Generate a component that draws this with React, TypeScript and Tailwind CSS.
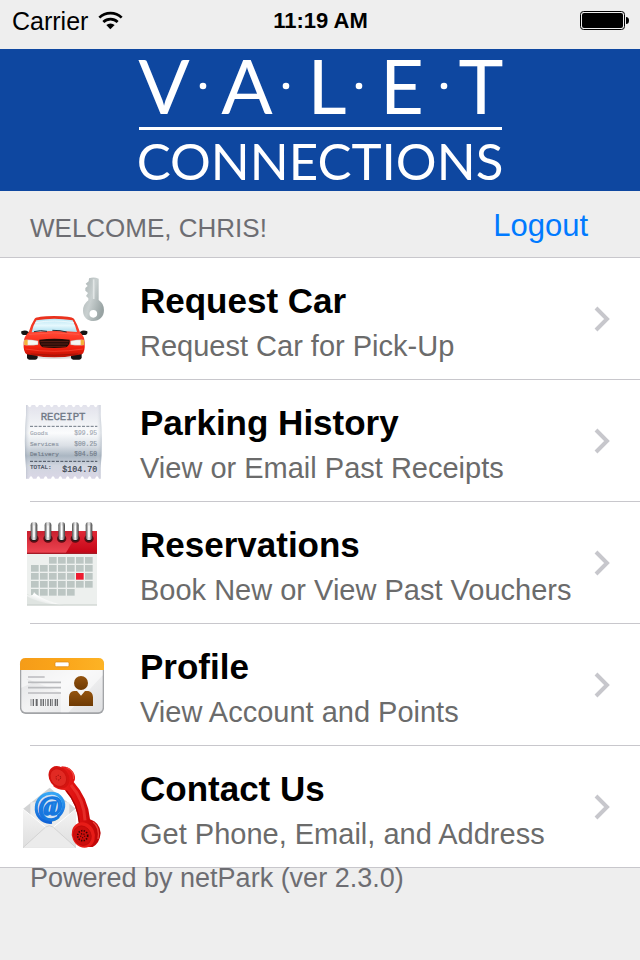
import type { ReactNode } from "react";

function WifiIcon() {
  return (
    <svg viewBox="0 0 75 57" className="h-[19px] w-[25px]" aria-hidden="true">
      <g fill="none" stroke="#000" strokeWidth="8">
        <path d="M4 20 A48 48 0 0 1 71 20" />
        <path d="M16 33 A31 31 0 0 1 59 33" />
      </g>
      <path d="M25 42 A19 19 0 0 1 50 42 L37 55 Z" />
    </svg>
  );
}

function BatteryIcon() {
  return (
    <svg viewBox="0 0 49 19" className="h-[19px] w-[49px]" role="img" aria-label="Battery full">
      <rect x="0.5" y="0.5" width="44" height="18" rx="3" fill="none" stroke="#000" />
      <rect x="2" y="2" width="41" height="15" rx="2" />
      <path d="M46 6 Q49 6 49 9.500 Q49 13 46 13 Z" />
    </svg>
  );
}

function Logo() {
  return (
    <svg
      viewBox="0 0 400 142"
      className="h-[142px] w-[400px] overflow-visible"
      role="img"
      aria-label="Valet Connections"
    >
      <g fill="#fff" textAnchor="middle" className="font-['Lato',sans-serif]">
        <g fontSize="76">
          <text x="44" y="65">V</text>
          <text x="127" y="65">A</text>
          <text x="207" y="65">L</text>
          <text x="282" y="65">E</text>
          <text x="361" y="65">T</text>
        </g>
        <circle cx="83" cy="37" r="3.300" />
        <circle cx="166" cy="37" r="3.300" />
        <circle cx="239" cy="37" r="3.300" />
        <circle cx="324" cy="37" r="3.300" />
        <rect x="19" y="78" width="363" height="3" />
        <text x="200" y="131" fontSize="51">CONNECTIONS</text>
      </g>
    </svg>
  );
}

function CarIcon() {
  return (
    <svg viewBox="0 0 330 300" className="h-[100px] w-[110px]" aria-hidden="true">
      <defs>
        <linearGradient id="keyFill" x1="0" x2="1" y1="0" y2="0.6">
          <stop offset="0" stopColor="#aab3b3" />
          <stop offset="0.5" stopColor="#c9d0d0" />
          <stop offset="1" stopColor="#98a3a3" />
        </linearGradient>
        <linearGradient id="carBody" x1="0" x2="0" y1="0" y2="1">
          <stop offset="0" stopColor="#e8301c" />
          <stop offset="0.45" stopColor="#ff4330" />
          <stop offset="0.75" stopColor="#f5200e" />
          <stop offset="1" stopColor="#bd1204" />
        </linearGradient>
        <linearGradient id="carGlass" x1="0" x2="0" y1="0" y2="1">
          <stop offset="0" stopColor="#b9e6f4" />
          <stop offset="0.5" stopColor="#e6f8fd" />
          <stop offset="1" stopColor="#a6dced" />
        </linearGradient>
      </defs>
      <path
        d="M237 28 Q251 23 266 29 V93 Q282 103 282 124 C282 144 268 156 250 156 C232 156 219 143 219 125 Q219 106 235 94 V88 L228 81 L234 72 L226 65 L226 57 L233 51 L227 44 L236 37 Z M250 123 A11 11 0 1 0 250 146 A11 11 0 1 0 250 123"
        fill="url(#keyFill)"
        fillRule="evenodd"
      />
      <path d="M251 31 V90" stroke="#e2e6e6" strokeWidth="5" />
      <ellipse cx="132" cy="262" rx="82" ry="8" fill="#000" opacity="0.12" />
      <rect x="51" y="248" width="32" height="24" rx="7" fill="#161313" />
      <rect x="183" y="248" width="32" height="24" rx="7" fill="#161313" />
      <path d="M34 187 Q46 181 55 188 L62 195 L54 198 H40 Q32 196 34 187Z" fill="#161616" />
      <path d="M232 187 Q220 181 211 188 L204 195 L212 198 H226 Q234 196 232 187Z" fill="#161616" />
      <path
        d="M74 149 Q80 142 132 141 Q184 142 192 149 Q202 165 210 190 Q224 202 224 220 Q226 249 216 256 Q174 265 133 265 Q91 265 50 256 Q39 249 41 220 Q42 202 56 190 Q63 165 74 149Z"
        fill="url(#carBody)"
      />
      <path d="M79 154 Q132 145 188 154 Q196 169 201 189 Q132 182 65 190 Q70 168 79 154Z" fill="url(#carGlass)" />
      <path d="M76 161 Q132 151 192 161" fill="none" stroke="#fff" strokeWidth="3" opacity="0.6" />
      <path d="M72 188 L92 185 L111 187 M127 184 L150 185 L170 189" fill="none" stroke="#253238" strokeWidth="3" />
      <path d="M57 196 Q132 187 208 196" fill="none" stroke="#ff6352" strokeWidth="2" />
      <path d="M43 213 Q62 211 84 216 V227 Q61 230 43 228Z" fill="#f5f6f2" stroke="#aaa" />
      <path d="M222 213 Q203 211 182 216 V227 Q204 230 222 228Z" fill="#f5f6f2" stroke="#aaa" />
      <path d="M43 213 L53 212 V228 H43Z M222 213 L212 212 V228 H222Z" fill="#f6b33a" />
      <path d="M88 212 Q133 206 179 212 Q181 228 168 235 Q133 239 98 235 Q86 228 88 212Z" fill="#210b06" />
      <path d="M91 218 H176 M93 225 H174 M98 232 H168" stroke="#7a2c1c" strokeWidth="2" />
      <path d="M46 240 Q132 254 219 240" fill="none" stroke="#ff4c3a" strokeWidth="2" />
      <path d="M62 255 Q132 263 204 255" fill="none" stroke="#a51407" strokeWidth="3" />
    </svg>
  );
}

const receiptLines = [
  { label: "Goods", price: "$99.95", y: 131, color: "#a5abb5" },
  { label: "Services", price: "$00.25", y: 164, color: "#8d96a2" },
  { label: "Delivery", price: "$04.50", y: 196, color: "#717b89" },
];

const paperOutline = [
  "M48 42",
  ...Array.from({ length: 10 }, () => "h5 q6 14 12 0 h5"),
  "h4 V72 Q279 150 272 232 V263",
  ...Array.from({ length: 10 }, () => "h-5 q-6 -14 -12 0 h-5"),
  "h-4 V232 Q41 150 48 72 Z",
].join(" ");

function ReceiptIcon() {
  return (
    <svg viewBox="0 0 330 300" className="h-[100px] w-[110px]" aria-hidden="true">
      <defs>
        <linearGradient id="paper" x1="0" x2="0" y1="0" y2="1">
          <stop offset="0" stopColor="#e2e2ec" />
          <stop offset="0.22" stopColor="#eef0f4" />
          <stop offset="0.38" stopColor="#fbfcfd" />
          <stop offset="0.55" stopColor="#dbe0e6" />
          <stop offset="0.69" stopColor="#aab6c2" />
          <stop offset="0.82" stopColor="#d0d5df" />
          <stop offset="1" stopColor="#dad7e6" />
        </linearGradient>
        <linearGradient id="paperEdge" x1="0" x2="1" y1="0" y2="0">
          <stop offset="0" stopColor="#8b98a8" stopOpacity="0.45" />
          <stop offset="0.08" stopColor="#fff" stopOpacity="0" />
          <stop offset="0.92" stopColor="#fff" stopOpacity="0" />
          <stop offset="1" stopColor="#8b98a8" stopOpacity="0.4" />
        </linearGradient>
      </defs>
      <path d={paperOutline} fill="url(#paper)" />
      <path d={paperOutline} fill="url(#paperEdge)" />
      <g className="font-['Liberation_Mono',monospace]">
        <text x="92" y="87" fontSize="32" fill="#6f7886" stroke="#6f7886" strokeWidth="1">RECEIPT</text>
        {receiptLines.map((l) => (
          <g key={l.label} fill={l.color} stroke={l.color} strokeWidth="0.5">
            <text x="60" y={l.y} fontSize="18">{l.label}</text>
            <text x="261" y={l.y} fontSize="19" textAnchor="end">{l.price}</text>
          </g>
        ))}
        <text x="60" y="233" fontSize="18" fill="#414a57" stroke="#414a57" strokeWidth="0.5">TOTAL:</text>
        <text x="262" y="243" fontSize="25" textAnchor="end" fill="#36404d" stroke="#36404d" strokeWidth="0.5">$104.70</text>
      </g>
      <path d="M60 106 H262" stroke="#6d7683" strokeWidth="3" strokeDasharray="9 4" />
      <path d="M60 211 H262" stroke="#454e5b" strokeWidth="3" strokeDasharray="9 4" />
    </svg>
  );
}

const calendarRows = [
  { y: 141, from: 2, to: 6 },
  { y: 165, from: 0, to: 6 },
  { y: 189, from: 0, to: 6 },
  { y: 213, from: 0, to: 6 },
  { y: 237, from: 0, to: 4 },
];

function CalendarIcon() {
  return (
    <svg viewBox="0 0 330 315" className="h-[105px] w-[110px]" aria-hidden="true">
      <defs>
        <linearGradient id="calRed" x1="0" x2="0" y1="0" y2="1">
          <stop offset="0" stopColor="#c9202e" />
          <stop offset="1" stopColor="#ee4552" />
        </linearGradient>
        <linearGradient id="calDark" x1="0" x2="0" y1="0" y2="1">
          <stop offset="0" stopColor="#e02936" />
          <stop offset="1" stopColor="#c50415" />
        </linearGradient>
        <linearGradient id="ring" x1="0" x2="1" y1="0" y2="0">
          <stop offset="0" stopColor="#4a4a4a" />
          <stop offset="0.3" stopColor="#b9b9b9" />
          <stop offset="0.5" stopColor="#f6f6f6" />
          <stop offset="0.75" stopColor="#929292" />
          <stop offset="1" stopColor="#3c3c3c" />
        </linearGradient>
        <linearGradient id="curl" x1="0" x2="1" y1="1" y2="0">
          <stop offset="0" stopColor="#c3cbc7" />
          <stop offset="0.5" stopColor="#fff" />
          <stop offset="1" stopColor="#b4bdb9" />
        </linearGradient>
      </defs>
      <rect x="51" y="63" width="210" height="223" fill="#edf0ee" />
      <rect x="51" y="63" width="210" height="67" fill="url(#calRed)" />
      <path d="M207 63 H261 V130 H167Z" fill="url(#calDark)" />
      <rect x="51" y="128" width="210" height="4" fill="#a51b27" />
      {calendarRows.map((row) =>
        [0, 1, 2, 3, 4, 5, 6]
          .filter((c) => c >= row.from && c <= row.to)
          .map((c) => (
            <rect
              key={`${row.y}-${c}`}
              x={63 + c * 27}
              y={row.y}
              width="23"
              height="20"
              fill={row.y === 189 && c === 5 ? "#ed1b30" : "#bcc6c3"}
            />
          )),
      )}
      <path d="M51 252 Q92 269 162 286 H51Z" fill="#dfe4e1" />
      <path d="M51 254 Q69 262 72 246 Q90 270 166 286 Q90 283 51 259Z" fill="url(#curl)" />
      <path d="M51 285 H261" stroke="#c5ccc8" strokeWidth="3" />
      {[72, 114, 155, 196, 237].map((x) => (
        <g key={x}>
          <ellipse cx={x} cy="86" rx="14" ry="12" fill="#5b0d14" />
          <ellipse cx={x} cy="86" rx="9" ry="7" fill="#1f1f1f" />
          <rect x={x - 10} y="36" width="20" height="54" rx="10" fill="url(#ring)" />
          <path d={`M${x} 48 V80`} stroke="#fff" strokeWidth="4" strokeLinecap="round" />
        </g>
      ))}
    </svg>
  );
}

function ProfileIcon() {
  return (
    <svg viewBox="0 0 330 270" className="h-[90px] w-[110px]" aria-hidden="true">
      <defs>
        <linearGradient id="cardBody" x1="0" x2="1" y1="0" y2="1">
          <stop offset="0" stopColor="#dcdddf" />
          <stop offset="0.5" stopColor="#f3f3f4" />
          <stop offset="1" stopColor="#dedfe1" />
        </linearGradient>
        <linearGradient id="cardTop" x1="0" x2="1" y1="0" y2="0">
          <stop offset="0" stopColor="#f59c18" />
          <stop offset="0.5" stopColor="#fba51a" />
          <stop offset="1" stopColor="#fdb325" />
        </linearGradient>
        <linearGradient id="person" x1="0" x2="0" y1="0" y2="1">
          <stop offset="0" stopColor="#94540f" />
          <stop offset="1" stopColor="#6e3a04" />
        </linearGradient>
      </defs>
      <rect x="30" y="56" width="252" height="166" rx="17" fill="#a2a4a7" />
      <rect x="34" y="60" width="244" height="157" rx="14" fill="url(#cardBody)" />
      <path d="M34 105 L66 130 L34 143Z M34 90 H278 V106 L176 217 H152 V157 L34 110Z" fill="#fff" opacity="0.5" />
      <path d="M30 90 V71 Q30 54 47 54 H265 Q282 54 282 71 V90Z" fill="url(#cardTop)" />
      <rect x="135" y="66" width="42" height="14" rx="4" fill="#fff" stroke="#da8410" strokeWidth="2" />
      <path d="M54 111 H104 M54 127 H153 M54 143 H153 M54 159 H153" stroke="#babbbe" strokeWidth="5" />
      <g fill="#68696c">
        {[62, 68, 77, 82, 91, 98, 105, 112, 120, 126, 134, 140].map((x, i) => (
          <rect key={x} x={x} y="177" width={i % 3 === 0 ? 2 : 4} height="21" />
        ))}
      </g>
      <circle cx="213" cy="129" r="21" fill="url(#person)" />
      <path d="M177 198 V170 Q178 155 192 153 H201 L213 167 L225 153 H235 Q248 156 249 171 V198Z" fill="url(#person)" />
    </svg>
  );
}

function ContactIcon() {
  return (
    <svg viewBox="0 0 330 315" className="h-[105px] w-[110px]" aria-hidden="true">
      <defs>
        <linearGradient id="phone" x1="0" x2="1" y1="0" y2="0">
          <stop offset="0" stopColor="#ee2a25" />
          <stop offset="0.5" stopColor="#dd100f" />
          <stop offset="1" stopColor="#b90606" />
        </linearGradient>
        <linearGradient id="atBlue" x1="0" x2="0" y1="0" y2="1">
          <stop offset="0" stopColor="#35a6f6" />
          <stop offset="1" stopColor="#0f62d6" />
        </linearGradient>
        <linearGradient id="envelope" x1="0" x2="0" y1="0" y2="1">
          <stop offset="0" stopColor="#f4f4f4" />
          <stop offset="1" stopColor="#dedede" />
        </linearGradient>
      </defs>
      <path d="M39 165 L119 101 L198 165 V282 H39Z" fill="#d2d3d4" />
      <path d="M61 145 H178 V230 H61Z" fill="#ececec" />
      <path d="M39 165 L104 221 Q118 229 132 221 L198 165 V282 H39Z" fill="url(#envelope)" />
      <path d="M39 281 L107 219 Q118 211 129 219 L198 281" fill="#ebebeb" stroke="#c8c8c8" strokeWidth="2" />
      <path d="M39 165 L106 219 M198 165 L131 219" stroke="#fff" strokeWidth="3" />
      <circle cx="117" cy="162" r="42" fill="#929598" />
      <circle cx="122" cy="159" r="41" fill="#d3e3f1" />
      <text
        x="121"
        y="184"
        fontSize="84"
        fontStyle="italic"
        fontWeight="700"
        textAnchor="middle"
        fill="url(#atBlue)"
        stroke="#1678df"
        strokeWidth="5"
        className="font-['Liberation_Serif',serif]"
      >
        @
      </text>
      <path
        d="M126 205 C94 208 76 182 79 157 C82 133 102 117 126 118 C151 119 167 143 159 166 Q154 181 143 187"
        fill="none"
        stroke="url(#atBlue)"
        strokeWidth="9"
      />
      <path
        d="M155 37 Q181 37 193 61 Q198 76 191 84 Q235 133 240 196 Q269 205 272 237 Q269 268 248 279 H225 L208 213 Q203 151 164 108 Q142 108 130 97Z"
        fill="url(#phone)"
      />
      <path d="M183 93 Q223 139 225 199" fill="none" stroke="#ee3a33" strokeWidth="9" opacity="0.7" />
      <path d="M169 110 Q204 151 208 207" fill="none" stroke="#a80505" strokeWidth="4" />
      <path d="M170 41 Q193 50 191 75 M249 204 Q270 220 264 255" fill="none" stroke="#ef443c" strokeWidth="4" />
      <ellipse cx="147" cy="70" rx="29" ry="36" transform="rotate(-35 147 70)" fill="#d51410" />
      <ellipse cx="145" cy="71" rx="23" ry="28" transform="rotate(-35 145 71)" fill="#e12a23" stroke="#c80f0c" strokeWidth="2" />
      <ellipse cx="220" cy="243" rx="34" ry="39" transform="rotate(-25 220 243)" fill="#e71c17" />
      <ellipse cx="217" cy="245" rx="26" ry="30" transform="rotate(-25 217 245)" fill="#cc0e0c" stroke="#b80a09" strokeWidth="2" />
      <circle cx="145" cy="71" r="7" fill="none" stroke="#8d0807" strokeWidth="3" strokeDasharray="3 4" />
      <circle cx="218" cy="245" r="15" fill="none" stroke="#3b0403" strokeWidth="5" strokeDasharray="4 4" />
      <circle cx="218" cy="245" r="6" fill="none" stroke="#3b0403" strokeWidth="4" strokeDasharray="3 4" />
    </svg>
  );
}

type MenuItem = { title: string; detail: string; icon: ReactNode };

const menu: MenuItem[] = [
  { title: "Request Car", detail: "Request Car for Pick-Up", icon: <CarIcon /> },
  { title: "Parking History", detail: "View or Email Past Receipts", icon: <ReceiptIcon /> },
  { title: "Reservations", detail: "Book New or View Past Vouchers", icon: <CalendarIcon /> },
  { title: "Profile", detail: "View Account and Points", icon: <ProfileIcon /> },
  { title: "Contact Us", detail: "Get Phone, Email, and Address", icon: <ContactIcon /> },
];

function MenuRow({ title, detail, icon }: MenuItem) {
  return (
    <li className="group">
      <a href="#" className="flex h-[121px] items-center pr-[29px] pl-[10px]">
        <span className="flex w-[130px] shrink-0">{icon}</span>
        <span className="flex min-w-0 grow flex-col gap-1 pt-2 whitespace-nowrap">
          <span className="text-[35px] leading-[42px] font-bold text-black">{title}</span>
          <span className="text-[29px] leading-[40px] text-[#6b6b6b]">{detail}</span>
        </span>
        <svg viewBox="0 0 18 28" className="h-7 w-[18px] shrink-0" aria-hidden="true">
          <path d="M3 3 L14 14 L3 25" fill="none" stroke="#c7c7cc" strokeWidth="4" />
        </svg>
      </a>
      <div className="ml-[30px] h-px bg-[#c8c7cc] group-last:ml-0" />
    </li>
  );
}

export default function App() {
  return (
    <div className="min-h-screen bg-[#eeeeee] font-['Liberation_Sans',Arial,sans-serif]">
      <div className="grid h-[49px] grid-cols-3 items-center pr-[11px] pb-2 pl-3">
        <div className="flex items-center gap-[10px] text-[25px] leading-7">
          Carrier
          <WifiIcon />
        </div>
        <div className="text-center text-[22px] leading-7 font-bold whitespace-nowrap">11:19 AM</div>
        <div className="flex justify-end">
          <BatteryIcon />
        </div>
      </div>
      <header>
        <h1 className="flex justify-center bg-[#0e47a0]">
          <Logo />
        </h1>
        <div className="flex h-[66px] items-center justify-between pt-1 pr-[52px] pl-[30px]">
          <p className="pt-1 text-[26px] leading-8 text-[#6d6d72]">WELCOME, CHRIS!</p>
          <button type="button" className="text-[31px] leading-9 text-[#007aff]">
            Logout
          </button>
        </div>
      </header>
      <main>
        <ul className="border-t border-[#c8c7cc] bg-white">
          {menu.map((item) => (
            <MenuRow key={item.title} {...item} />
          ))}
        </ul>
      </main>
      <footer className="pl-[30px] text-[27px] leading-5 text-[#6d6d72]">Powered by netPark (ver 2.3.0)</footer>
    </div>
  );
}
